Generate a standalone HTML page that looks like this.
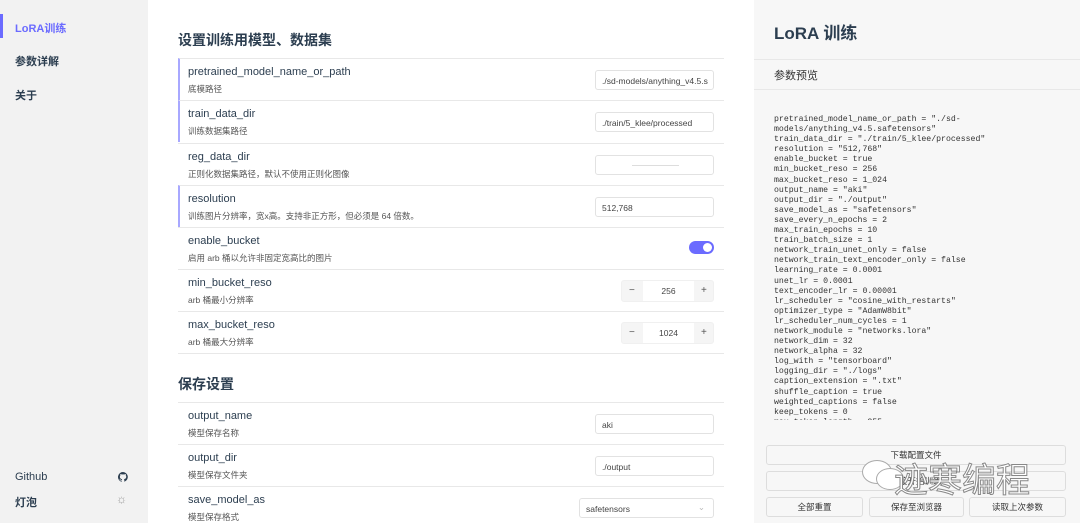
<!DOCTYPE html>
<html><head><meta charset="utf-8"><style>
*{box-sizing:border-box;margin:0;padding:0}
body{width:1080px;height:523px;overflow:hidden;font-family:"Liberation Sans","Noto Sans CJK SC",sans-serif;background:#fff;position:relative;color:#2c3e50}
.side{position:absolute;left:0;top:0;width:148px;height:523px;background:#f2f2f2}
.side .it{position:absolute;left:15px;font-size:11px;font-weight:bold;color:#2c3e50}
.main{position:absolute;left:148px;top:0;width:606px;height:523px;background:#fff}
h2{position:absolute;left:30px;font-size:14px;font-weight:bold;color:#2c3e50}
.row{position:absolute;left:30px;width:546px;height:42px;border-top:1px solid #e8e8e8}
.row.a{border-left:2px solid #a8a8ff}
.row .n{position:absolute;left:10px;top:7px;font-size:11px;color:#2c3e50}
.row .d{position:absolute;left:10px;top:24px;font-size:8.5px;color:#555}
.row.a .n,.row.a .d{left:8px}
.inp{position:absolute;right:10px;top:11px;width:119px;height:20px;border:1px solid #e2e2e2;border-radius:3px;font-size:8.5px;color:#444;padding:5px 6px;white-space:nowrap;overflow:hidden}
.right{position:absolute;left:754px;top:0;width:326px;height:523px;background:#f7f7f7}
pre{position:absolute;left:20px;top:115px;font-family:"Liberation Mono",monospace;font-size:8.2px;line-height:10.1px;color:#333;height:305px;overflow:hidden}
.btn{position:absolute;height:20px;border:1px solid #ddd;border-radius:3px;background:#f7f7f7;font-size:8.5px;color:#333;text-align:center;line-height:18px}
.num{position:absolute;right:10px;top:10px;width:93px;height:22px;border:1px solid #f0f0f0;border-radius:3px;background:#f5f5f5}
.num span{position:absolute;top:4px;font-size:10px;color:#555}
.num .v{position:absolute;left:21px;top:0;width:51px;height:20px;background:#fff;font-size:8.5px;text-align:center;line-height:20px;color:#444}
</style></head><body>
<div class="side">
<div style="position:absolute;left:0;top:14px;width:3px;height:24px;background:#6b6bff"></div>
<div class="it" style="top:20px;color:#6b6bff">LoRA训练</div>
<div class="it" style="top:53px">参数详解</div>
<div class="it" style="top:87px">关于</div>
<div class="it" style="top:471px;font-weight:normal">Github</div>
<svg style="position:absolute;left:118px;top:472px" width="10" height="10" viewBox="0 0 16 16"><path fill="#2c3e50" d="M8 0a8 8 0 0 0-2.5 15.6c.4 0 .5-.2.5-.4v-1.5c-2.2.5-2.7-1-2.7-1-.4-.9-.9-1.2-.9-1.2-.7-.5.1-.5.1-.5.8.1 1.2.8 1.2.8.7 1.3 1.9.9 2.4.7 0-.5.3-.9.5-1.1-1.8-.2-3.6-.9-3.6-4 0-.9.3-1.6.8-2.1-.1-.2-.4-1 .1-2.1 0 0 .7-.2 2.2.8a7.5 7.5 0 0 1 4 0c1.5-1 2.2-.8 2.2-.8.4 1.1.2 1.9.1 2.1.5.6.8 1.3.8 2.1 0 3.1-1.9 3.7-3.6 3.9.3.3.5.8.5 1.5v2.2c0 .2.1.5.6.4A8 8 0 0 0 8 0z"/></svg>
<div class="it" style="top:494px">灯泡</div>
<div style="position:absolute;left:116px;top:492px;font-size:12px;color:#999">☼</div>
</div>
<div class="main">
<h2 style="top:30px">设置训练用模型、数据集</h2>
<div class="row a" style="top:58px"><div class="n">pretrained_model_name_or_path</div><div class="d">底模路径</div><div class="inp">./sd-models/anything_v4.5.s</div></div>
<div class="row a" style="top:100px"><div class="n">train_data_dir</div><div class="d">训练数据集路径</div><div class="inp">./train/5_klee/processed</div></div>
<div class="row" style="top:143px"><div class="n">reg_data_dir</div><div class="d">正则化数据集路径，默认不使用正则化图像</div><div class="inp"><div style="position:absolute;left:36px;top:9px;width:47px;border-top:1px solid #ddd"></div></div></div>
<div class="row a" style="top:185px"><div class="n">resolution</div><div class="d">训练图片分辨率，宽x高。支持非正方形，但必须是 64 倍数。</div><div class="inp">512,768</div></div>
<div class="row" style="top:227px"><div class="n">enable_bucket</div><div class="d">启用 arb 桶以允许非固定宽高比的图片</div><div style="position:absolute;right:10px;top:13px;width:25px;height:13px;border-radius:7px;background:#6b6bff"><div style="position:absolute;right:2px;top:2px;width:9px;height:9px;border-radius:50%;background:#fff"></div></div></div>
<div class="row" style="top:269px"><div class="n">min_bucket_reso</div><div class="d">arb 桶最小分辨率</div><div class="num"><span style="left:7px">−</span><div class="v">256</div><span style="left:79px">+</span></div></div>
<div class="row" style="top:311px"><div class="n">max_bucket_reso</div><div class="d">arb 桶最大分辨率</div><div class="num"><span style="left:7px">−</span><div class="v">1024</div><span style="left:79px">+</span></div></div>
<div class="row" style="top:353px;height:1px"></div>
<h2 style="top:374px">保存设置</h2>
<div class="row" style="top:402px"><div class="n">output_name</div><div class="d">模型保存名称</div><div class="inp">aki</div></div>
<div class="row" style="top:444px"><div class="n">output_dir</div><div class="d">模型保存文件夹</div><div class="inp">./output</div></div>
<div class="row" style="top:486px"><div class="n">save_model_as</div><div class="d">模型保存格式</div><div class="inp" style="width:135px">safetensors<span style="position:absolute;right:8px;top:3px;color:#bbb">⌄</span></div></div>
</div>
<div class="right">
<div style="position:absolute;left:20px;top:19px;font-size:17px;font-weight:bold;color:#2c3e50">LoRA 训练</div>
<div style="position:absolute;left:0;top:59px;width:326px;border-top:1px solid #e8e8e8"></div>
<div style="position:absolute;left:20px;top:67px;font-size:11px;color:#333">参数预览</div>
<div style="position:absolute;left:0;top:89px;width:326px;border-top:1px solid #e8e8e8"></div>
<pre>pretrained_model_name_or_path = "./sd-
models/anything_v4.5.safetensors"
train_data_dir = "./train/5_klee/processed"
resolution = "512,768"
enable_bucket = true
min_bucket_reso = 256
max_bucket_reso = 1_024
output_name = "aki"
output_dir = "./output"
save_model_as = "safetensors"
save_every_n_epochs = 2
max_train_epochs = 10
train_batch_size = 1
network_train_unet_only = false
network_train_text_encoder_only = false
learning_rate = 0.0001
unet_lr = 0.0001
text_encoder_lr = 0.00001
lr_scheduler = "cosine_with_restarts"
optimizer_type = "AdamW8bit"
lr_scheduler_num_cycles = 1
network_module = "networks.lora"
network_dim = 32
network_alpha = 32
log_with = "tensorboard"
logging_dir = "./logs"
caption_extension = ".txt"
shuffle_caption = true
weighted_captions = false
keep_tokens = 0
max_token_length = 255</pre>
<div class="btn" style="left:12px;top:445px;width:300px">下载配置文件</div>
<div class="btn" style="left:12px;top:471px;width:300px">直接开始训练</div>
<div class="btn" style="left:12px;top:497px;width:97px">全部重置</div>
<div class="btn" style="left:115px;top:497px;width:95px">保存至浏览器</div>
<div class="btn" style="left:215px;top:497px;width:97px">读取上次参数</div>
<div style="position:absolute;left:108px;top:460px;width:30px;height:24px;border-radius:50%;background:#fff;border:1px solid #aaa"></div>
<div style="position:absolute;left:122px;top:468px;width:28px;height:22px;border-radius:50%;background:#fff;border:1px solid #aaa"></div>
<div style="position:absolute;left:140px;top:453px;font-size:34px;color:#fff;-webkit-text-stroke:1px #888;font-family:'Noto Sans CJK SC',sans-serif">迹寒编程</div>
</div>
</body></html>
